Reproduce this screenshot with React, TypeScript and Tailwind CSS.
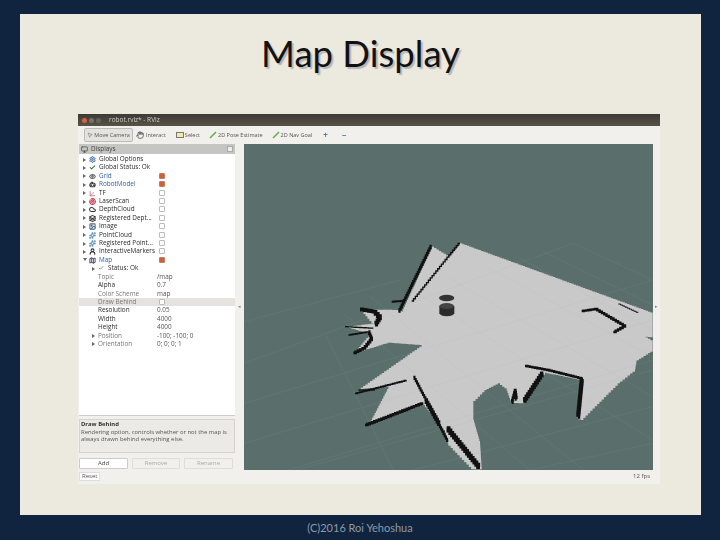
import {
  Axis3d,
  Bot,
  Check,
  Cloud,
  Eye,
  Hand,
  Image,
  Layers,
  Map as MapIcon,
  Monitor,
  MousePointer2,
  Settings,
  Sparkles,
  Radar,
  UserRound,
  type LucideIcon,
} from "lucide-react";

type Row = {
  label: string;
  value?: string;
  checked?: boolean;
  hasBox?: boolean;
  blue?: boolean;
  arrow?: "right" | "down";
  icon?: LucideIcon;
  color?: string;
  indent?: "prop" | "status";
  grey?: boolean;
  active?: boolean;
};

const rows: Row[] = [
  { label: "Global Options", arrow: "right", icon: Settings, color: "#5f86bd" },
  { label: "Global Status: Ok", arrow: "right", icon: Check, color: "#2f6d2f" },
  { label: "Grid", arrow: "right", icon: Eye, color: "#666", blue: true, hasBox: true, checked: true },
  { label: "RobotModel", arrow: "right", icon: Bot, color: "#333", blue: true, hasBox: true, checked: true },
  { label: "TF", arrow: "right", icon: Axis3d, color: "#c08a8a", hasBox: true },
  { label: "LaserScan", arrow: "right", icon: Radar, color: "#c8425a", hasBox: true },
  { label: "DepthCloud", arrow: "right", icon: Cloud, color: "#333", hasBox: true },
  { label: "Registered Dept...", arrow: "right", icon: Layers, color: "#333", hasBox: true },
  { label: "Image", arrow: "right", icon: Image, color: "#4f6b8c", hasBox: true },
  { label: "PointCloud", arrow: "right", icon: Sparkles, color: "#6f9cc2", hasBox: true },
  { label: "Registered Point...", arrow: "right", icon: Sparkles, color: "#6f9cc2", hasBox: true },
  { label: "InteractiveMarkers", arrow: "right", icon: UserRound, color: "#333", hasBox: true },
  { label: "Map", arrow: "down", icon: MapIcon, color: "#556", blue: true, hasBox: true, checked: true },
  { label: "Status: Ok", arrow: "right", indent: "status" },
  { label: "Topic", value: "/map", indent: "prop", grey: true },
  { label: "Alpha", value: "0.7", indent: "prop" },
  { label: "Color Scheme", value: "map", indent: "prop", grey: true },
  { label: "Draw Behind", indent: "prop", grey: true, active: true },
  { label: "Resolution", value: "0.05", indent: "prop" },
  { label: "Width", value: "4000", indent: "prop" },
  { label: "Height", value: "4000", indent: "prop" },
  { label: "Position", value: "-100; -100; 0", indent: "prop", arrow: "right", grey: true },
  { label: "Orientation", value: "0; 0; 0; 1", indent: "prop", arrow: "right", grey: true },
];

const gridLines = [
  [-258, 275, 210, 150],
  [-258, 400, 730, 40],
  [-258, 520, 968, 150],
  [-258, 640, 968, 270],
  [-258, 760, 968, 390],
  [-100, 720, 968, 420],
  [250, 720, 968, 530],
  [600, 720, 968, 640],
  [730, 40, 968, 150],
  [640, 65, 968, 225],
  [570, 85, 968, 300],
  [470, 110, 968, 380],
  [350, 140, 968, 500],
  [230, 170, 968, 630],
  [120, 200, 760, 720],
  [40, 250, 600, 720],
  [-10, 320, 190, 720],
];

// breaks a line into pixel steps, the map in the picture is a coarse occupancy grid
const stair = (points: string, step: number, closed: boolean) => {
  const pts = points.split(" ").map((p) => p.split(",").map(Number));
  const out: string[] = [];
  const count = closed ? pts.length : pts.length - 1;
  for (let i = 0; i < count; i++) {
    const p = pts[i];
    const next = pts[(i + 1) % pts.length];
    const n = Math.max(1, Math.round(Math.max(Math.abs(next[0] - p[0]), Math.abs(next[1] - p[1])) / step));
    for (let k = 0; k < n; k++) {
      const x0 = p[0] + ((next[0] - p[0]) * k) / n;
      const y0 = p[1] + ((next[1] - p[1]) * k) / n;
      const x1 = p[0] + ((next[0] - p[0]) * (k + 1)) / n;
      out.push(`${x0},${y0}`, `${x1},${y0}`);
    }
  }
  return out.join(" ");
};

const walls: [string, number][] = [
  ["305,48 205,252", 7],
  ["390,40 245,220", 4],
  ["185,215 225,212", 6],
  ["90,238 130,245 150,265 135,290", 11],
  ["45,290 130,295", 4],
  ["55,315 115,305", 5],
  ["115,305 125,330 105,355 70,372", 8],
  ["75,490 230,450", 5],
  ["85,480 135,480", 4],
  ["105,585 280,518", 8],
  ["250,440 355,640", 6],
  ["285,510 330,590", 10],
  ["350,595 450,718", 12],
  ["585,408 651,420 759,447", 7],
  ["640,430 580,520", 11],
  ["756,447 744,567", 12],
  ["545,518 555,480 560,515", 8],
  ["755,243 795,237 885,290 850,310", 7],
  ["865,222 925,250", 3],
];

const mapPoints =
  "390,40 968,250 968,322 940,318 968,335 968,365 920,395 915,425 870,460 760,570 745,565 755,450 650,428 580,520 545,518 530,475 510,460 470,480 430,520 430,570 450,640 455,718 430,718 355,640 345,600 285,525 115,585 175,470 85,478 275,345 180,338 70,372 120,310 50,290 130,280 95,238 200,240 215,245 305,50 355,80";

const mapOutline = stair(mapPoints, 7, true);

const Tool = ({ color, label }: { color: string; label: string }) => (
  <div className="flex items-center gap-[1px]">
    <svg width="8" height="8" viewBox="0 0 8 8">
      <path d="M1 7 L7 1" stroke={color} strokeWidth="1.5" />
    </svg>
    <span>{label}</span>
  </div>
);

const TreeRow = ({ row }: { row: Row }) => {
  const RowIcon = row.icon;
  const pad =
    row.indent === "prop"
      ? "pl-[19px]"
      : row.indent === "status"
        ? "pl-[29px]"
        : "pl-[20px]";
  return (
    <div
      className={`relative flex h-[8.42px] items-center text-[6.4px] leading-none ${pad} ${
        row.active ? "bg-[#e4e3e0]" : ""
      }`}
    >
      {row.arrow && (
        <span
          className={`absolute top-[2.5px] h-0 w-0 ${row.indent ? "left-[13px]" : "left-[4px]"} ${
            row.arrow === "right"
              ? "border-y-[2px] border-l-[3px] border-y-transparent border-l-[#666]"
              : "border-x-[2px] border-t-[3px] border-x-transparent border-t-[#666]"
          }`}
        />
      )}
      {RowIcon && (
        <RowIcon
          className="absolute left-[10px] top-[1px] h-[7px] w-[7px]"
          style={{ color: row.color }}
          strokeWidth={3.5}
        />
      )}
      {row.indent === "status" && (
        <Check className="absolute left-[19px] top-[1px] h-[6px] w-[6px] text-[#3c8a3c]" strokeWidth={3} />
      )}
      <span
        className={`whitespace-nowrap ${
          row.blue ? "text-[#2f5f9e]" : row.grey ? "text-[#777]" : "text-[#2a2a2a]"
        } ${row.indent === "prop" ? "" : "font-medium"}`}
      >
        {row.label}
      </span>
      {row.value && (
        <span className="absolute left-[78px] whitespace-nowrap text-[#555]">{row.value}</span>
      )}
      {(row.hasBox || row.active) && (
        <span
          className={`absolute left-[80px] top-[1px] h-[6px] w-[6px] rounded-[1px] border ${
            row.checked ? "border-[#c87a5a] bg-[#c9633f]" : "border-[#bbb] bg-white"
          }`}
        />
      )}
    </div>
  );
};

export default function App() {
  return (
    <div className="flex h-[540px] w-[720px] flex-col overflow-hidden bg-[#10243f] font-['Lato',sans-serif]">
      <div className="ml-[20px] mt-[14px] flex h-[501px] w-[681px] flex-col items-center bg-[#ece9df]">
        <h1 className="mt-[17px] h-[48px] text-[36.5px] leading-[44px] text-[#111] [text-shadow:2px_2px_1px_#b5b5b5]">
          Map Display
        </h1>

        <div className="ml-[58px] mt-[35px] flex h-[370px] w-[582px] flex-col self-start bg-[#f1f0ed] font-['Open_Sans',sans-serif] blur-[0.5px]">
          <div className="flex h-[12px] items-center gap-[2px] bg-gradient-to-b from-[#3d3a34] to-[#57534a] pl-[4px] text-[6.5px] text-[#cfcdc5]">
            <span className="h-[5px] w-[5px] rounded-full bg-[#d9623a]" />
            <span className="h-[5px] w-[5px] rounded-full bg-[#77736a]" />
            <span className="h-[5px] w-[5px] rounded-full bg-[#66625a]" />
            <span className="ml-[6px]">robot.rviz* - RViz</span>
          </div>

          <div className="flex h-[18px] items-center pl-[6px] text-[5.5px] text-[#555]">
            <div className="flex h-[14px] w-[49px] items-center justify-center gap-[1px] rounded-[2px] border border-[#bbb] bg-[#e4e3df]">
              <MousePointer2 className="h-[6px] w-[6px] text-[#666]" />
              Move Camera
            </div>
            <div className="ml-[3px] flex items-center gap-[2px]">
              <Hand className="h-[8px] w-[8px] text-[#333]" />
              <span>Interact</span>
            </div>
            <div className="ml-[10px] flex items-center gap-[1px]">
              <span className="h-[6px] w-[8px] border border-[#777] bg-[#f5e9a8]" />
              <span>Select</span>
            </div>
            <div className="ml-[9px]">
              <Tool color="#5fae3c" label="2D Pose Estimate" />
            </div>
            <div className="ml-[9px]">
              <Tool color="#5fae3c" label="2D Nav Goal" />
            </div>
            <span className="ml-[11px] text-[8px] font-bold leading-none text-[#4a7ab0]">+</span>
            <span className="ml-[14px] text-[8px] font-bold leading-none text-[#4a7ab0]">−</span>
          </div>

          <div className="flex min-h-0 flex-1">
            <div className="flex w-[157px] flex-col pl-[1px]">
              <div className="flex h-[10px] items-center bg-[#c5c5c3] pl-[2px] text-[6.4px] text-[#444]">
                <Monitor className="h-[7px] w-[7px] text-[#333]" />
                <span className="ml-[3px]">Displays</span>
                <span className="ml-auto mr-[2px] h-[6px] w-[6px] border border-[#aaa] bg-[#eee]" />
              </div>
              <div className="h-[262px] border-b border-[#ccc] bg-white pt-[1px]">
                {rows.map((row) => (
                  <TreeRow key={row.label} row={row} />
                ))}
              </div>
              <div className="mt-[3px] h-[34px] border border-[#d5d3cd] bg-[#eceae6] px-[1px] py-[1px] text-[5.9px] leading-[7.5px] text-[#555]">
                <div className="font-bold text-[#333]">Draw Behind</div>
                <div>Rendering option, controls whether or not the map is always drawn behind everything else.</div>
              </div>
              <div className="mt-[5px] flex gap-[4px] text-[6px]">
                <div className="flex h-[11px] w-[49px] items-center justify-center rounded-[1px] border border-[#ccc] bg-white text-[#444]">Add</div>
                <div className="flex h-[11px] w-[48px] items-center justify-center rounded-[1px] border border-[#ddd] text-[#aaa]">Remove</div>
                <div className="flex h-[11px] w-[49px] items-center justify-center rounded-[1px] border border-[#ddd] text-[#aaa]">Rename</div>
              </div>
            </div>

            <div className="flex w-[9px] items-center justify-center text-[5px] text-[#888]">◂</div>

            <svg width="409" height="326" viewBox="-258 -258 1227 978" className="bg-[#5a6f6c]">
              <defs>
                <clipPath id="map-clip">
                  <polygon points={mapOutline} />
                </clipPath>
              </defs>
              {gridLines.map((l, i) => (
                <line key={i} x1={l[0]} y1={l[1]} x2={l[2]} y2={l[3]} stroke="#687c7a" strokeWidth="1.5" />
              ))}
              <polygon points={mapOutline} fill="#c9c9c9" />
              <g clipPath="url(#map-clip)">
                {gridLines.map((l, i) => (
                  <line key={i} x1={l[0]} y1={l[1]} x2={l[2]} y2={l[3]} stroke="#c2c2c2" strokeWidth="1.5" />
                ))}
              </g>
              {walls.map(([points, width], i) => (
                <polyline key={i} points={stair(points, 7, false)} fill="none" stroke="#111" strokeWidth={width} />
              ))}
              <ellipse cx="350" cy="204" rx="23" ry="10" fill="#333" />
              <path d="M328 228 V250 A23 11 0 0 0 373 250 V228 Z" fill="#2c2c2c" />
              <ellipse cx="350" cy="228" rx="22" ry="9" fill="#444" />
            </svg>

            <div className="flex w-[7px] items-center justify-center text-[5px] text-[#888]">▸</div>
          </div>

          <div className="flex h-[14px] items-center justify-between pb-[1px] pl-[1px] pr-[10px] text-[6px] text-[#555]">
            <span className="flex h-[9px] items-center border border-[#ddd] bg-white px-[2px]">Reset</span>
            <span>12 fps</span>
          </div>
        </div>
      </div>

      <div className="flex flex-1 items-center justify-center pt-[1px] text-[11px] text-[#8e99a8]">
        (C)2016 Roi Yehoshua
      </div>
    </div>
  );
}
